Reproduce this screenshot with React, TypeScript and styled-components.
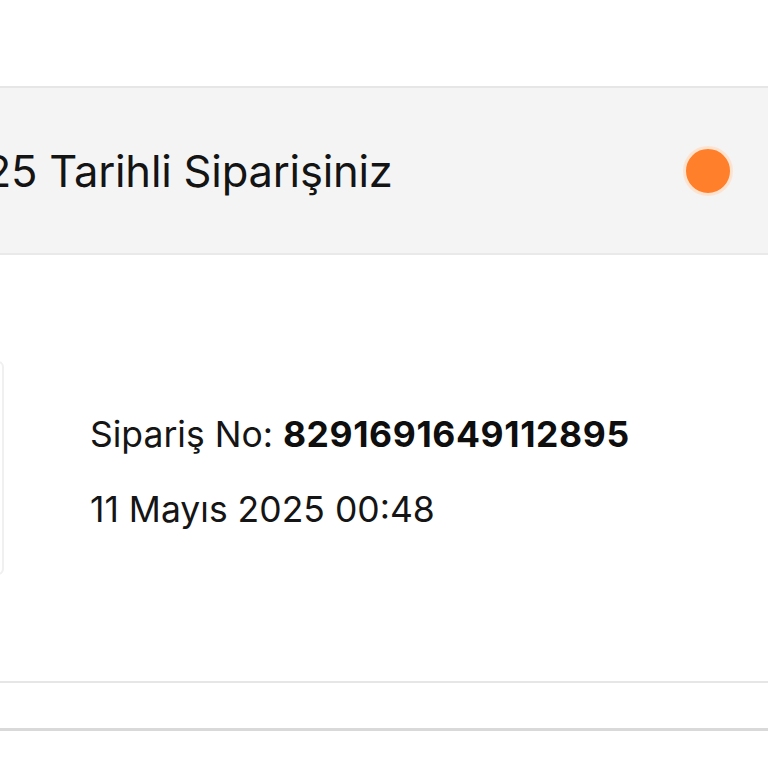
import styled, { createGlobalStyle } from "styled-components";

const GlobalStyle = createGlobalStyle`
  html, body {
    margin: 0;
    padding: 0;
    background: #ffffff;
    overflow: hidden;
  }
  body {
    font-family: Inter, "Noto Sans", "Liberation Sans", sans-serif;
    color: #111111;
  }
`;

const Page = styled.div`
  width: 1014px;
  margin-left: -246px;
  padding-top: 86px;
`;

const OrderCard = styled.section`
  border-top: 2px solid #e6e6e6;
  border-bottom: 2px solid #e6e6e6;
  background: #ffffff;
`;

const CardHeader = styled.div`
  display: flex;
  align-items: center;
  justify-content: space-between;
  height: 165px;
  padding: 0 36px 0 0;
  background: #f4f4f4;
  border-bottom: 2px solid #e9e9e9;
`;

const HeaderTitle = styled.span`
  font-size: 43.5px;
  font-weight: 400;
  letter-spacing: -0.2px;
  color: #141414;
  margin-left: -2px;
`;

const StatusDot = styled.span<{ $color: string }>`
  width: 44px;
  height: 44px;
  flex-shrink: 0;
  border-radius: 50%;
  background: ${({ $color }) => $color};
  border: 3px solid #fde3cf;
  box-sizing: content-box;
  margin-right: -1px;
`;

const CardBody = styled.div`
  display: flex;
  align-items: center;
  gap: 86px;
  padding: 106px 36px;
`;

const Thumbnail = styled.div`
  width: 214px;
  height: 214px;
  flex-shrink: 0;
  border: 2px solid #f0f0f0;
  border-radius: 6px;
  box-sizing: border-box;
  background: #ffffff;
`;

const OrderInfo = styled.div`
  display: flex;
  flex-direction: column;
  gap: 32px;
  margin-top: 9px;
`;

const InfoLine = styled.div`
  font-size: 35.5px;
  line-height: 1.2;
  color: #151515;

  strong {
    font-weight: 700;
    letter-spacing: 0.6px;
    color: #0e0e0e;
  }
`;

const NextCard = styled.section`
  margin-top: 45px;
  border-top: 3px solid #d9d9d9;
  height: 60px;
`;

export default function App() {
  return (
    <>
      <GlobalStyle />
      <Page>
        <OrderCard>
          <CardHeader>
            <HeaderTitle>11 Mayıs 2025 Tarihli Siparişiniz</HeaderTitle>
            <StatusDot $color="#ff7f2a" />
          </CardHeader>
          <CardBody>
            <Thumbnail />
            <OrderInfo>
              <InfoLine>
                Sipariş No: <strong>8291691649112895</strong>
              </InfoLine>
              <InfoLine>11 Mayıs 2025 00:48</InfoLine>
            </OrderInfo>
          </CardBody>
        </OrderCard>
        <NextCard />
      </Page>
    </>
  );
}
